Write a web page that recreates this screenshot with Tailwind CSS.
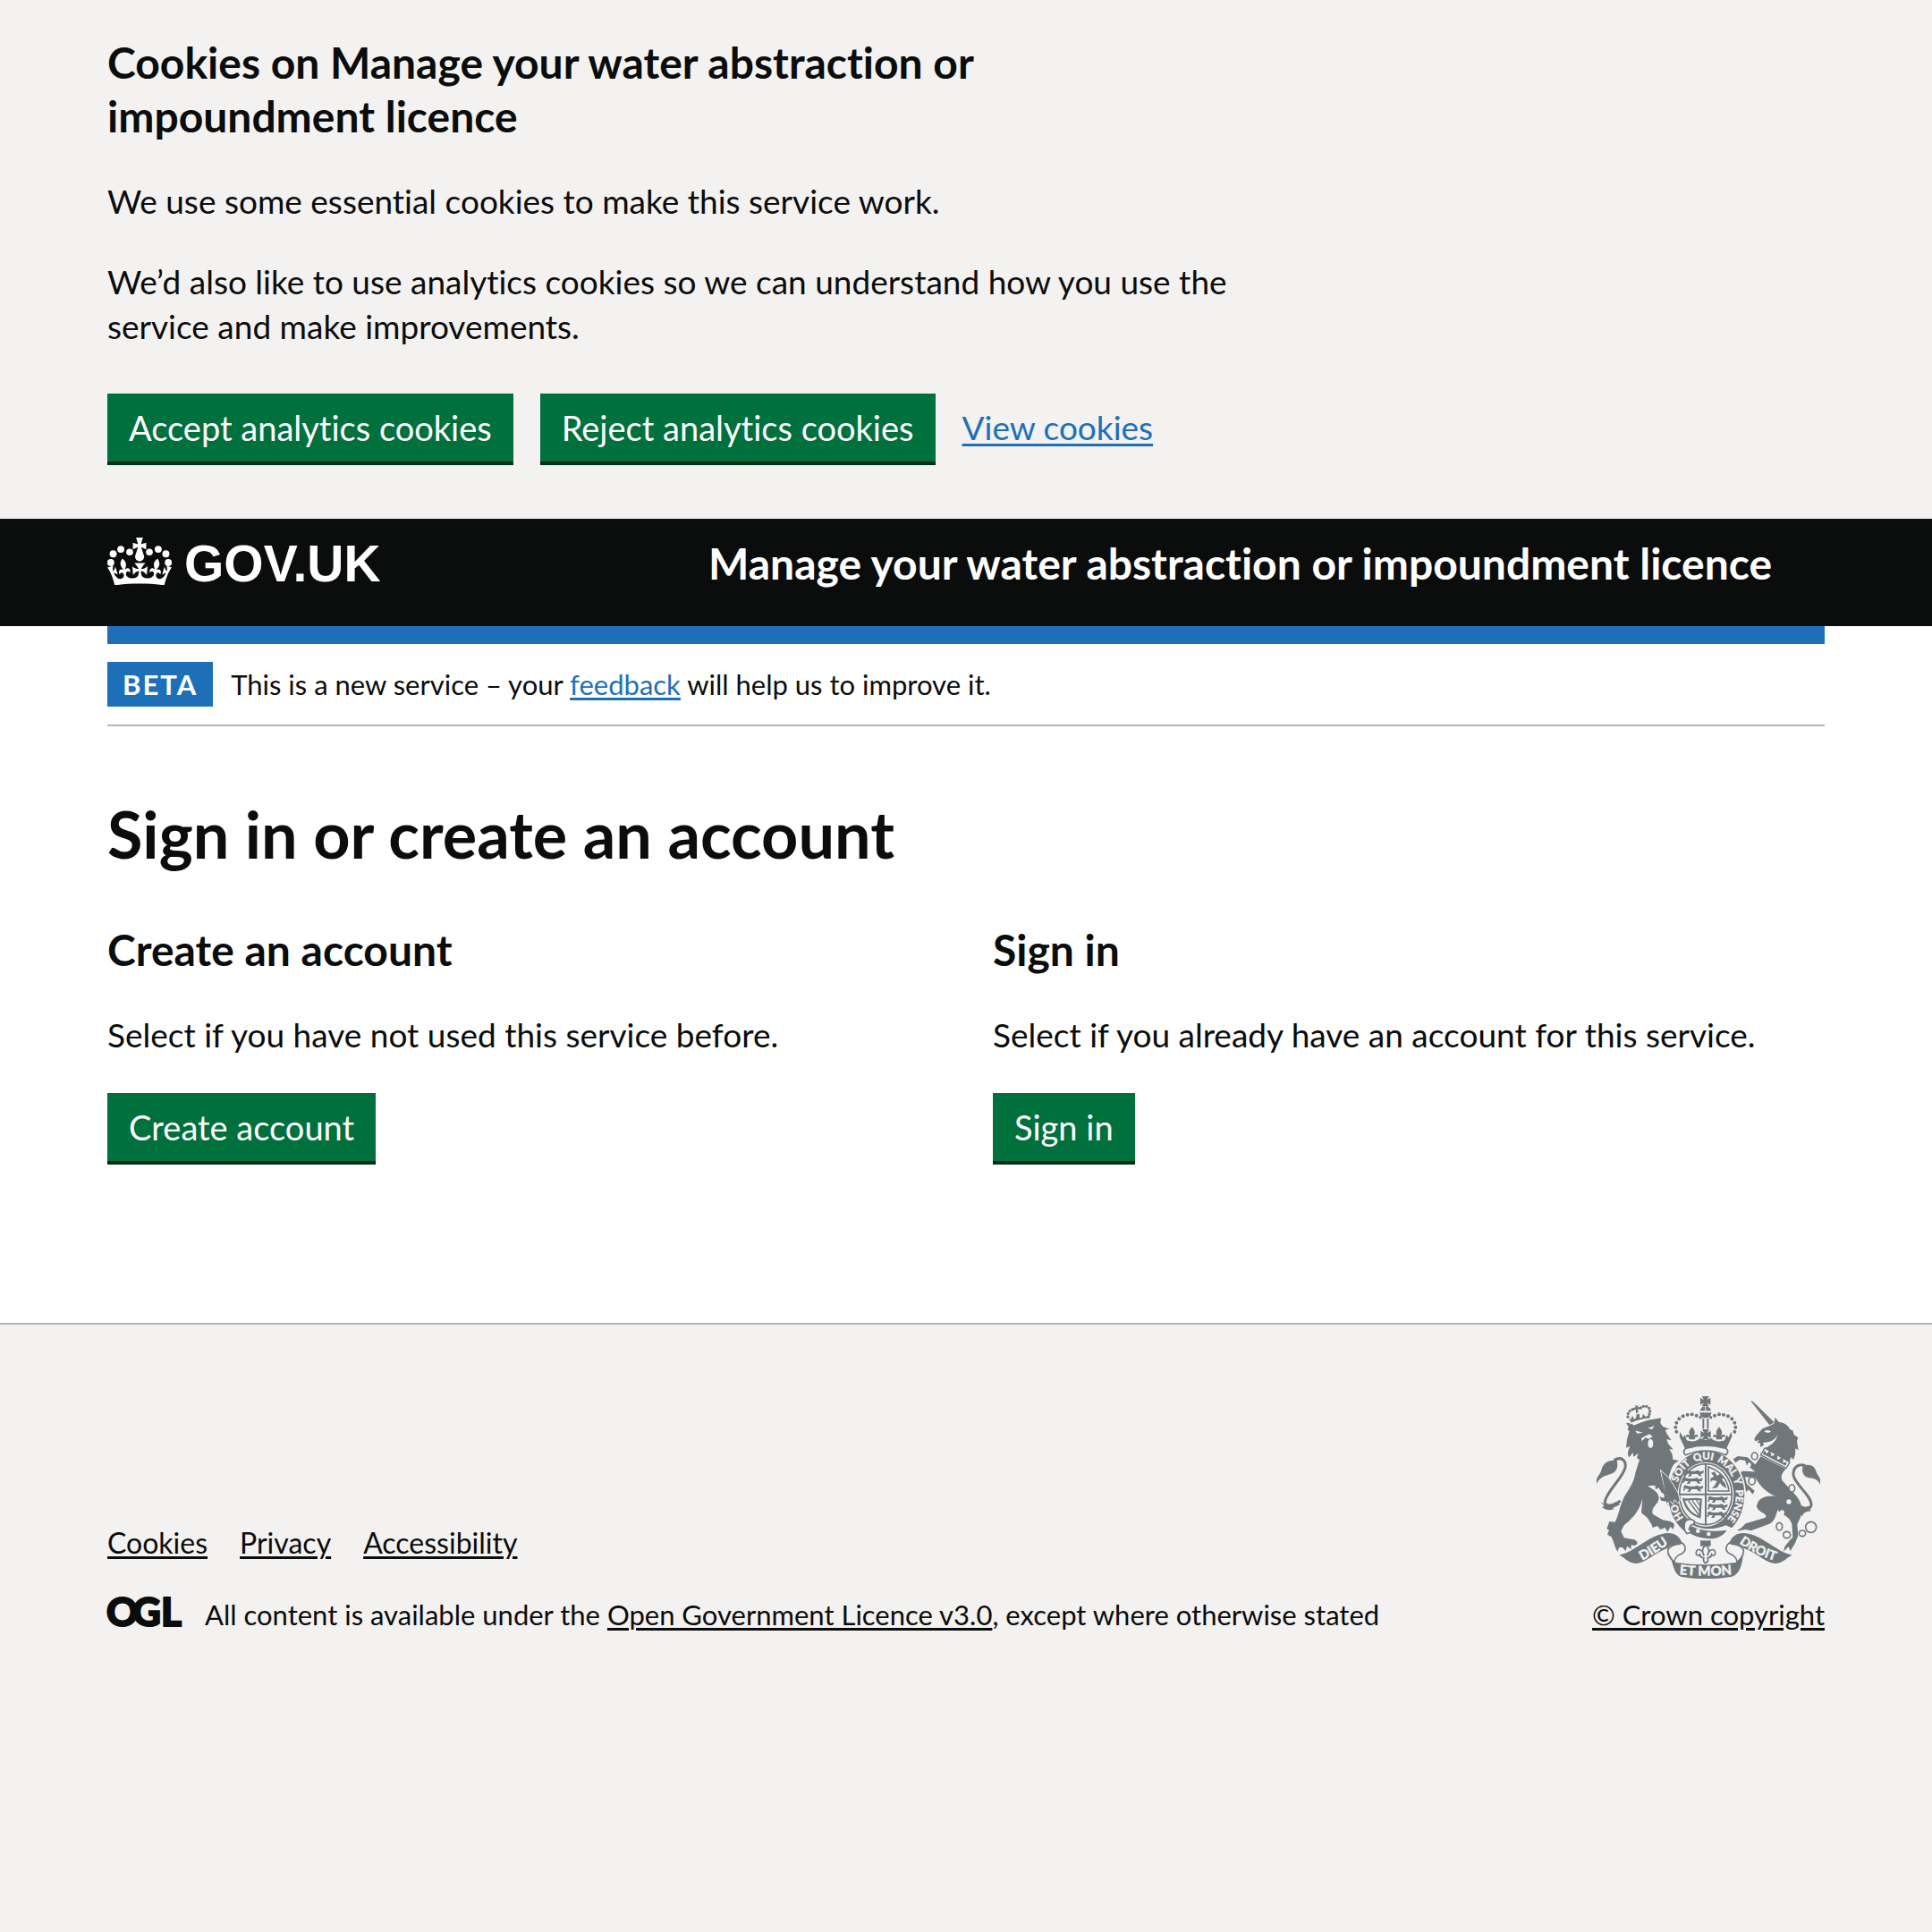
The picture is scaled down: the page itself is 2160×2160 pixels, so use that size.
<!DOCTYPE html>
<html lang="en" class="bg-[#f3f2f1]">
<head>
<meta charset="utf-8">
<meta name="viewport" content="width=device-width, initial-scale=1">
<title>Sign in or create an account</title>
<script src="https://cdn.jsdelivr.net/npm/@tailwindcss/browser@4"></script>
</head>
<body class="bg-[#f3f2f1] font-['Lato',sans-serif] text-[37px] leading-[50px] text-[#0b0c0c] [font-variant-ligatures:none]">

<section aria-label="Cookies on Manage your water abstraction or impoundment licence" class="px-[120px] pt-10 pb-[60px]">
  <div class="mx-auto max-w-[1920px]">
    <div class="max-w-[1260px]">
      <h2 class="max-w-[1100px] text-[48px] leading-[60px] font-bold">Cookies on Manage your water abstraction or impoundment licence</h2>
      <p class="mt-10">We use some essential cookies to make this service work.</p>
      <p class="mt-10">We’d also like to use analytics cookies so we can understand how you use the service and make improvements.</p>
    </div>
    <div class="mt-[50px] flex flex-wrap items-center gap-[30px]">
      <button type="button" class="h-20 border-b-4 border-[#002d18] bg-[#00703c] px-6 text-[38px] leading-[50px] text-white">Accept analytics cookies</button>
      <button type="button" class="h-20 border-b-4 border-[#002d18] bg-[#00703c] px-6 text-[38px] leading-[50px] text-white">Reject analytics cookies</button>
      <a href="#cookies" class="pb-1 text-[#1d70b8] underline decoration-3 underline-offset-4">View cookies</a>
    </div>
  </div>
</section>

<header class="bg-[#0b0c0c] px-[120px] text-white">
  <div class="mx-auto flex h-[120px] max-w-[1920px] items-start pt-5">
    <a href="#home" class="flex w-[35%] items-start gap-[14px]">
      <svg class="mt-px h-[53px] w-[72px]" viewBox="0 0 32 23.5" fill="currentColor" aria-hidden="true">
        <circle cx="1.7" cy="12.4" r="1.75"/><circle cx="2.9" cy="8.1" r="1.75"/><circle cx="6.7" cy="5.8" r="1.75"/><circle cx="11.1" cy="7.2" r="1.7"/>
        <circle cx="30.3" cy="12.4" r="1.75"/><circle cx="29.1" cy="8.1" r="1.75"/><circle cx="25.3" cy="5.8" r="1.75"/><circle cx="20.9" cy="7.2" r="1.7"/>
        <path d="M17 4.7l2.3 1.2V2.5l-2.3.7-.2-.2.9-3h-3.4l.9 3-.2.2c-.1.1-2.3-.7-2.3-.7v3.4L15 4.7c.1.1.1.2.2.2l-1.3 4c-.1.2-.1.4-.1.6 0 1.1.8 2 1.9 2.2h.7c1-.2 1.9-1.1 1.9-2.1 0-.2 0-.4-.1-.6l-1.3-4c-.1-.2 0-.2.1-.3"/>
        <path transform="translate(0 -6.3)" d="M16 29.2c4.4 0 8.6.3 12.3.8 1.1-4.5 2.4-7 3.7-8.8l-2.5-.9c.2 1.3.3 1.9 0 2.7-.4-.4-.8-1.1-1.1-2.3l-1.2 4c.7-.5 1.3-.8 2-.9-1.1 2.5-2.6 3.1-3.5 3-1.1-.2-1.7-1.2-1.5-2.1.3-1.2 1.5-1.5 2.1-.1 1.1-2.3-.8-3-2-2.3 1.9-1.9 2.1-3.5.6-5.6-2.1 1.6-2.1 3.2-1.2 5.5-1.2-1.4-3.2-.6-2.5 1.6.9-1.4 2.1-.5 1.9.8-.2 1.1-1.7 2.1-3.5 1.9-2.7-.2-2.9-2.1-2.9-3.6.7-.1 1.9.5 2.9 1.9l.4-4.3c-1.1 1.1-2.1 1.4-3.2 1.4.4-1.2 2.1-3 2.1-3h-5.4s1.7 1.9 2.1 3c-1.1 0-2.1-.2-3.2-1.4l.4 4.3c1-1.4 2.2-2 2.9-1.9-.1 1.5-.2 3.4-2.9 3.6-1.9.2-3.4-.8-3.5-1.9-.2-1.3 1-2.2 1.9-.8.7-2.3-1.2-3-2.5-1.6.9-2.2.9-3.9-1.2-5.5-1.5 2-1.3 3.7.6 5.6-1.2-.7-3.1 0-2 2.3.6-1.4 1.8-1.1 2.1.1.2.9-.3 1.9-1.5 2.1-.9.2-2.4-.5-3.5-3 .6 0 1.2.3 2 .9l-1.2-4c-.3 1.1-.7 1.9-1.1 2.3-.3-.8-.2-1.4 0-2.7l-2.9.9C1.3 23 2.6 25.5 3.7 30c3.7-.5 7.9-.8 12.3-.8"/>
      </svg>
      <span class="font-['Liberation_Sans',sans-serif] text-[57px] leading-[60px] font-bold">GOV.UK</span>
    </a>
    <a href="#service" class="text-[48px] leading-[60px] font-bold">Manage your water abstraction or impoundment licence</a>
  </div>
</header>

<div class="bg-white px-[120px]">
  <div class="mx-auto max-w-[1920px] border-t-20 border-[#1d70b8]">
    <div class="flex items-center gap-5 border-b-2 border-[#b1b4b6] py-5">
      <strong class="bg-[#1d70b8] px-[17px] text-[31px] leading-[50px] font-bold tracking-[2px] text-white">BETA</strong>
      <p class="text-[31px] leading-10">This is a new service – your <a href="#feedback" class="text-[#1d70b8] underline decoration-3 underline-offset-3">feedback</a> will help us to improve it.</p>
    </div>
  </div>
  <main class="mx-auto max-w-[1920px] pt-20 pb-[177px]">
    <h1 class="text-[72px] leading-20 font-bold">Sign in or create an account</h1>
    <div class="mt-[60px] grid grid-cols-2 gap-[60px]">
      <section>
        <h2 class="text-[48px] leading-[60px] font-bold">Create an account</h2>
        <p class="mt-10">Select if you have not used this service before.</p>
        <button type="button" class="mt-10 block h-20 border-b-4 border-[#002d18] bg-[#00703c] px-6 text-[38px] leading-[50px] text-white">Create account</button>
      </section>
      <section>
        <h2 class="text-[48px] leading-[60px] font-bold">Sign in</h2>
        <p class="mt-10">Select if you already have an account for this service.</p>
        <button type="button" class="mt-10 block h-20 border-b-4 border-[#002d18] bg-[#00703c] px-6 text-[38px] leading-[50px] text-white">Sign in</button>
      </section>
    </div>
  </main>
</div>

<footer class="border-t-2 border-[#b1b4b6] px-[120px] pt-20 pb-[50px] text-[31px] leading-10">
  <div class="mx-auto flex max-w-[1920px] items-end justify-between">
    <div>
      <ul class="flex gap-9 text-[32px]">
        <li><a href="#cookies" class="underline decoration-3 underline-offset-3">Cookies</a></li>
        <li><a href="#privacy" class="underline decoration-3 underline-offset-3">Privacy</a></li>
        <li><a href="#accessibility" class="underline decoration-3 underline-offset-3">Accessibility</a></li>
      </ul>
      <div class="mt-10 flex items-start gap-[27px]">
        <svg class="h-[34px] w-[82px] overflow-visible" viewBox="0 0 82 34" role="img" aria-label="Open Government Licence">
          <text x="-1 28 60" y="33" font-family="Lato" font-weight="900" font-size="44" fill="#0b0c0c" stroke="#0b0c0c" stroke-width="2">OGL</text>
        </svg>
        <p>All content is available under the <a href="#ogl" class="underline decoration-3 underline-offset-3">Open Government Licence v3.0</a>, except where otherwise stated</p>
      </div>
    </div>
    <a href="#copyright" class="flex flex-col items-center gap-5 underline decoration-3 underline-offset-3">
      <svg class="h-[204px] w-[250px]" viewBox="42 33 750 612" fill="#6f777b" aria-hidden="true">
        <defs>
          <path id="garter" d="M409 479A101 117 0 0 1 409 245A101 117 0 0 1 409 479"/>
          <path id="dieu" d="M186 588Q230 568 292 522"/>
          <path id="droit" d="M516 523Q574 566 644 586"/>
          <path id="etmon" d="M312 630Q408 640 504 630"/>
          <path id="fleur" d="M0-24C-14-8-10 0-4 8C-12-2-22 0-20 12C-16 6-8 8-10 18H10C8 8 16 6 20 12C22 0 12-2 4 8C10 0 14-8 0-24Z"/>
          <path id="pattee" d="M-12-17H12L5-5L17-12V12L5 5L12 17H-12L-5 5L-17 12V-12L-5-5Z"/>
          <path id="beast" d="M-34-6L-26-12L-14-8L4-8L14-11L22-6L34-10L32 0L22 2L28 9H18L12 2H-6L-10 10H-20L-14 2L-26 0L-30 8L-35 5L-30-2Z"/>
        </defs>

        <!-- lion: tail, body, face, crown -->
        <path d="M42 327C38 306 50 302 58 282C62 258 82 244 110 249C116 272 108 288 88 294C72 300 52 304 42 327Z"/>
        <path d="M100 248C124 234 142 246 138 272C132 304 76 352 70 386C70 404 94 404 122 384" fill="none" stroke="#6f777b" stroke-width="9"/>
        <path d="M56 388C70 398 90 400 108 386L120 396C108 406 92 404 100 412C84 418 66 412 60 404L68 402Z"/>
        <path d="M141 122L160 124L166 131C190 120 214 112 232 110L258 106L256 124L264 134L286 143L272 146L278 160L293 181L277 177L282 192L299 212L286 210L296 228L298 245L318 249L302 260C292 274 288 290 284 304L300 318L318 350L322 376L314 396L304 380L296 396L288 384L280 402L276 386L258 383L254 370L266 374L276 362L260 356L250 340L240 346L238 332L212 334C236 346 252 360 251 376C248 398 224 404 230 428L262 447C278 452 300 450 303 466L298 480L290 470L280 488L272 474L256 480L246 468L230 474L226 462L212 440L192 424L196 376C188 404 180 430 134 466L124 486L134 508L168 514C182 520 182 530 170 534L158 532L158 546L144 536L140 552L128 540L118 540L112 554L104 538L98 520L92 505L78 497L84 482L76 478L85 453L104 455C114 440 120 400 135 370C148 348 168 322 172 290L186 246L177 240L182 224L166 236L164 222L152 238C142 226 150 212 154 200L141 206L144 178L152 150L145 144L150 137Z"/>
        <path d="M172 148L197 155L178 158ZM214 140L236 132L228 144ZM192 174L206 166L220 160L230 168L218 176L206 172L194 184Z" fill="#f3f2f1"/>
        <ellipse cx="223" cy="192" rx="9" ry="15" fill="#f3f2f1"/>
        <g>
          <circle cx="147" cy="102" r="5"/><circle cx="148" cy="91" r="5"/><circle cx="154" cy="82" r="5"/><circle cx="163" cy="77" r="5"/><circle cx="190" cy="72" r="5"/><circle cx="199" cy="67" r="5"/><circle cx="209" cy="67" r="5"/><circle cx="218" cy="73" r="5"/><circle cx="221" cy="83" r="5"/><circle cx="219" cy="93" r="5"/>
          <path d="M171 62L177 66L182 62L180 70L188 70L186 78L180 76L182 88L174 90L174 78L166 80L166 72L173 70Z"/>
          <path d="M148 106L156 112L162 98L168 110L174 106L176 94L186 92L186 104L194 106L198 92L206 102L214 98L222 92L220 108C200 108 176 114 160 124Z"/>
          <path d="M154 126C176 116 200 109 226 108" fill="none" stroke="#f3f2f1" stroke-width="4"/>
        </g>

        <!-- unicorn: horn, head, collar, body, legs, tail, chain -->
        <path d="M558 48L566 50L638 121L622 130Z"/>
        <path d="M571 176L578 164L598 142L628 130L638 124L640 104L654 120C674 122 686 132 690 144L700 148L704 162L718 172L714 184L719 214L709 208L708 230L702 246L694 238L688 254C660 240 632 226 606 207C626 200 646 184 650 160C642 180 622 190 600 188L604 196L592 204L590 190L580 190L588 180L574 184Z"/>
        <path d="M604 151C612 145 620 147 627 151C620 158 610 156 604 151Z" fill="#f3f2f1"/>
        <path d="M606 207L690 254L678 274L592 230Z" fill="#f3f2f1" stroke="#6f777b" stroke-width="4"/>
        <path d="M598 226L606 214L612 226L618 220L622 214L627 224L628 234L636 232L642 224L648 234L648 246L656 244L664 236L668 248L666 256L680 254L676 266Z"/>
        <path d="M593 235L677 277C662 292 656 308 670 322L702 356C724 378 742 410 722 448L715 462L718 500L708 526L692 552L686 538L668 554L674 536L690 516L700 506L697 462C690 434 660 430 650 414C640 440 640 452 620 462L560 484L542 480L508 486L528 474L542 460L608 440C620 426 582 424 579 402C582 376 606 364 642 368C600 350 590 330 574 306L540 304L546 328L572 350L566 362L552 346L544 354L522 318L508 298L532 284L574 286L546 264L540 248L522 246L508 256L500 244L516 234L548 238L574 262Z"/>
        <path d="M792 329C796 306 784 302 778 284C774 268 760 258 734 266C728 290 738 304 752 306C768 308 784 310 792 329Z"/>
        <path d="M742 266C718 256 700 274 702 298C708 330 762 366 762 396C760 412 748 414 728 404" fill="none" stroke="#6f777b" stroke-width="9"/>
        <path d="M708 378C712 398 730 410 750 402L766 402L756 412L762 418C746 420 736 422 732 436C716 420 706 400 708 378Z"/>
        <g fill="none" stroke="#6f777b" stroke-width="5">
          <ellipse cx="572" cy="234" rx="10" ry="12"/><ellipse cx="563" cy="317" rx="11" ry="13" fill="#f3f2f1"/><ellipse cx="697" cy="342" rx="10" ry="12" fill="#f3f2f1"/><ellipse cx="655" cy="470" rx="10" ry="13"/><ellipse cx="680" cy="498" rx="12" ry="11"/><ellipse cx="732" cy="493" rx="11" ry="10"/><circle cx="761" cy="472" r="18"/>
        </g>
        <g fill="#f3f2f1"><circle cx="687" cy="387" r="8"/><circle cx="664" cy="423" r="8"/><ellipse cx="554" cy="263" rx="6" ry="8"/></g>

        <!-- garter and its motto -->
        <ellipse cx="410" cy="365" rx="133" ry="154" fill="#f3f2f1"/>
        <ellipse cx="410" cy="364" rx="128" ry="148"/>
        <g fill="#f3f2f1" stroke="#f3f2f1" stroke-width="1" font-family="Lato" font-weight="900" font-size="34" text-anchor="middle">
          <text><textPath href="#garter" startOffset="16.5%">HO</textPath></text>
          <text><textPath href="#garter" startOffset="36.5%">SOIT</textPath></text>
          <text><textPath href="#garter" startOffset="48.8%">QUI</textPath></text>
          <text><textPath href="#garter" startOffset="60.8%">MAL</textPath></text>
          <text><textPath href="#garter" startOffset="69%">Y</textPath></text>
          <text><textPath href="#garter" startOffset="80.5%">PENSE</textPath></text>
        </g>
        <ellipse cx="408" cy="362" rx="94" ry="108" fill="#f3f2f1"/>
        <ellipse cx="408" cy="362" rx="88" ry="102" fill="none" stroke="#6f777b" stroke-width="5"/>
        <path d="M318 362H498M408 258V464" stroke="#6f777b" stroke-width="6"/>

        <!-- quarters of the shield -->
        <use href="#beast" x="368" y="292"/><use href="#beast" x="364" y="317"/><use href="#beast" x="366" y="343"/>
        <use href="#beast" x="448" y="380"/><use href="#beast" x="448" y="405"/><use href="#beast" x="446" y="431"/>
        <path d="M417 270V351H486C482 314 458 284 417 270Z" fill="none" stroke="#6f777b" stroke-width="5"/>
        <path d="M426 290L438 286L446 300L458 292L470 306L462 312L474 326L478 342L464 334L456 324L446 340L428 342L438 332L446 318L432 314L424 320V308L436 302Z"/>
        <path d="M334 378C352 384 372 372 392 380L388 438C362 432 340 408 334 378Z" fill="none" stroke="#6f777b" stroke-width="7"/>
        <path d="M350 384L386 432M362 382L388 418M376 380L390 402" stroke="#6f777b" stroke-width="4"/>

        <!-- strap and buckle -->
        <path d="M350 458C400 486 440 480 476 466L520 486L430 524L340 500Z" fill="#f3f2f1"/>
        <path d="M358 468C400 488 440 488 478 482C470 500 444 512 420 511C392 510 370 502 350 490Z"/>
        <path d="M340 452C356 440 372 448 370 460L358 466L352 478L360 488L346 494C336 488 332 466 340 452Z" fill="#f3f2f1" stroke="#6f777b" stroke-width="5"/>
        <circle cx="382" cy="485" r="7" fill="#f3f2f1"/><circle cx="418" cy="495" r="7" fill="#f3f2f1"/>

        <!-- lion's arm over the garter -->
        <path d="M256 280L284 306L302 334L316 358L322 382L314 392L304 380L298 396L288 384L270 350Z" stroke="#f3f2f1" stroke-width="3"/>
        <path d="M256 290L270 345L290 384L280 390L262 350L240 300Z"/>

        <!-- crown above the shield -->
        <use href="#pattee" x="407" y="50"/>
        <path d="M389 82C392 72 398 67 407 67C416 67 424 72 426 82ZM388 88H427C426 100 418 106 407 106C396 106 388 100 388 88Z"/>
        <path d="M407 66V84" stroke="#f3f2f1" stroke-width="3"/>
        <path d="M400 108V142M415 108V142" stroke="#6f777b" stroke-width="6"/>
        <g id="arch"><circle cx="310" cy="152" r="6"/><circle cx="307" cy="137" r="6"/><circle cx="310" cy="122" r="6"/><circle cx="319" cy="109" r="6"/><circle cx="332" cy="100" r="6"/><circle cx="347" cy="95" r="6"/><circle cx="362" cy="94" r="6"/><circle cx="377" cy="98" r="6"/><circle cx="390" cy="104" r="5"/></g>
        <use href="#arch" transform="matrix(-1 0 0 1 815 0)"/>
        <use href="#fleur" x="362" y="160"/><use href="#fleur" x="453" y="160"/>
        <use href="#pattee" x="408" y="161"/>
        <path d="M322 152L332 172L338 162L344 180C360 188 380 184 388 174L408 180L427 174C436 184 456 188 472 180L478 162L484 172L494 152L496 168L478 208C440 198 376 198 338 208L320 168Z"/>
        <path d="M350 206C384 196 432 196 466 206C484 208 486 220 476 230C432 212 384 212 340 230C330 220 334 208 350 206Z" fill="#f3f2f1" stroke="#6f777b" stroke-width="5"/>

        <!-- scroll with its motto -->
        <g id="scroll">
          <path d="M118 565C166 560 220 494 282 492C306 492 324 506 329 528C302 530 286 536 282 542C240 556 206 592 176 594C150 594 140 578 118 565Z"/>
          <path d="M324 522C342 532 346 552 326 562C312 568 304 574 303 590C286 576 276 556 284 544C292 534 308 530 324 528" fill="none" stroke="#6f777b" stroke-width="5"/>
        </g>
        <use href="#scroll" transform="matrix(-1 0 0 1 816 0)"/>
        <path d="M284 556C290 570 298 584 306 590C370 600 448 600 512 590C522 584 530 568 534 556C532 600 520 632 496 638C440 648 376 648 324 638C302 630 300 600 284 556Z"/>
        <g fill="#f3f2f1" stroke="#f3f2f1" stroke-width="1" font-family="Lato" font-weight="900" font-size="44" text-anchor="middle">
          <text><textPath href="#dieu" startOffset="50%">DIEU</textPath></text>
          <text font-size="43"><textPath href="#droit" startOffset="50%">DROIT</textPath></text>
          <text font-size="45"><textPath href="#etmon" startOffset="50%">ET MON</textPath></text>
        </g>

        <!-- pendant fleur -->
        <path d="M390 517H425V536H390Z"/>
        <path d="M408 530C394 546 396 556 402 568C398 548 380 540 376 556C374 566 384 570 388 564C390 576 398 574 402 576C398 584 402 592 408 592C414 592 418 584 414 576C418 574 426 576 428 564C432 570 442 566 440 556C436 540 418 548 414 568C420 556 422 546 408 530Z" fill="#f3f2f1" stroke="#6f777b" stroke-width="5"/>
      </svg>
      <span>© Crown copyright</span>
    </a>
  </div>
</footer>

</body>
</html>
